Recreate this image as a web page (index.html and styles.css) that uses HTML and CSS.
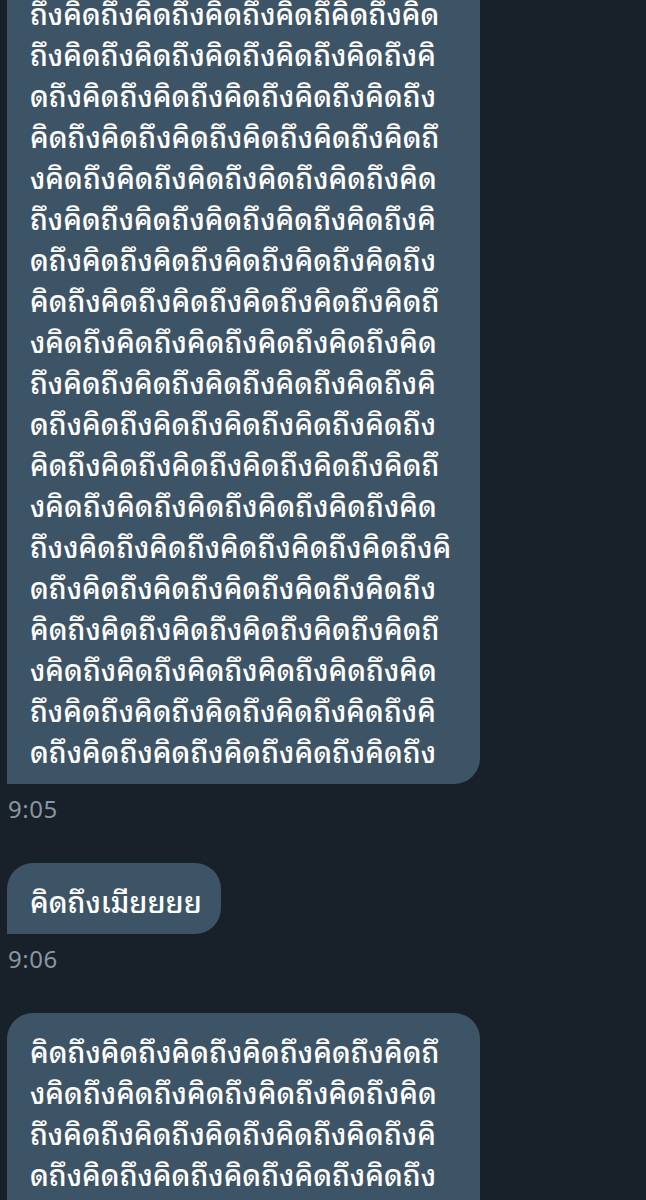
FILE: index.html
```html
<!DOCTYPE html>
<html lang="th">
<head>
<meta charset="utf-8">
<title>Chat</title>
<link rel="stylesheet" href="styles.css">
</head>
<body>
<div class="chat">
  <div class="msg msg-first">
    <div class="bubble bubble-long">
      <span class="line">ถึงคิดถึงคิดถึงคิดถึงคิดถึคิดถึงคิด</span>
      <span class="line">ถึงคิดถึงคิดถึงคิดถึงคิดถึงคิดถึงคิ</span>
      <span class="line">ดถึงคิดถึงคิดถึงคิดถึงคิดถึงคิดถึง</span>
      <span class="line">คิดถึงคิดถึงคิดถึงคิดถึงคิดถึงคิดถึ</span>
      <span class="line">งคิดถึงคิดถึงคิดถึงคิดถึงคิดถึงคิด</span>
      <span class="line">ถึงคิดถึงคิดถึงคิดถึงคิดถึงคิดถึงคิ</span>
      <span class="line">ดถึงคิดถึงคิดถึงคิดถึงคิดถึงคิดถึง</span>
      <span class="line">คิดถึงคิดถึงคิดถึงคิดถึงคิดถึงคิดถึ</span>
      <span class="line">งคิดถึงคิดถึงคิดถึงคิดถึงคิดถึงคิด</span>
      <span class="line">ถึงคิดถึงคิดถึงคิดถึงคิดถึงคิดถึงคิ</span>
      <span class="line">ดถึงคิดถึงคิดถึงคิดถึงคิดถึงคิดถึง</span>
      <span class="line">คิดถึงคิดถึงคิดถึงคิดถึงคิดถึงคิดถึ</span>
      <span class="line">งคิดถึงคิดถึงคิดถึงคิดถึงคิดถึงคิด</span>
      <span class="line">ถึงงคิดถึงคิดถึงคิดถึงคิดถึงคิดถึงคิ</span>
      <span class="line">ดถึงคิดถึงคิดถึงคิดถึงคิดถึงคิดถึง</span>
      <span class="line">คิดถึงคิดถึงคิดถึงคิดถึงคิดถึงคิดถึ</span>
      <span class="line">งคิดถึงคิดถึงคิดถึงคิดถึงคิดถึงคิด</span>
      <span class="line">ถึงคิดถึงคิดถึงคิดถึงคิดถึงคิดถึงคิ</span>
      <span class="line">ดถึงคิดถึงคิดถึงคิดถึงคิดถึงคิดถึง</span>
    </div>
    <div class="time">9:05</div>
  </div>
  <div class="msg">
    <div class="bubble bubble-short">
      <span class="line">คิดถึงเมียยยย</span>
    </div>
    <div class="time">9:06</div>
  </div>
  <div class="msg">
    <div class="bubble bubble-long">
      <span class="line">คิดถึงคิดถึงคิดถึงคิดถึงคิดถึงคิดถึ</span>
      <span class="line">งคิดถึงคิดถึงคิดถึงคิดถึงคิดถึงคิด</span>
      <span class="line">ถึงคิดถึงคิดถึงคิดถึงคิดถึงคิดถึงคิ</span>
      <span class="line">ดถึงคิดถึงคิดถึงคิดถึงคิดถึงคิดถึง</span>
      <span class="line">คิดถึงคิดถึงคิดถึงคิดถึงคิดถึงคิดถึ</span>
    </div>
  </div>
</div>
</body>
</html>
```

FILE: styles.css
```css
html, body {
  margin: 0;
  padding: 0;
  background: #18202a;
}
body {
  height: 1200px;
  overflow: hidden;
  font-family: "Noto Sans Thai Looped", "Noto Looped Thai", "Loma", "Garuda", "Noto Sans", "Noto Sans Thai", sans-serif;
}
.chat {
  display: flex;
  flex-direction: column;
  padding-left: 7px;
  margin-top: -25px;
}
.msg {
  display: flex;
  flex-direction: column;
  align-items: flex-start;
  margin-bottom: 42px;
}
.bubble {
  background: #3d5467;
  color: #ffffff;
  border-radius: 26px 26px 26px 0;
  padding: 17px 24px 13px 23px;
  font-size: 29px;
  font-weight: 500;
  line-height: 41px;
  box-sizing: border-box;
}
.bubble-long {
  width: 473px;
}
.bubble-short {
  padding-right: 19px;
}
.line {
  display: block;
  white-space: nowrap;
}
.time {
  margin-top: 9px;
  margin-left: 1px;
  color: #8a96a1;
  font-size: 24px;
  line-height: 28px;
  letter-spacing: 0.5px;
}
```
